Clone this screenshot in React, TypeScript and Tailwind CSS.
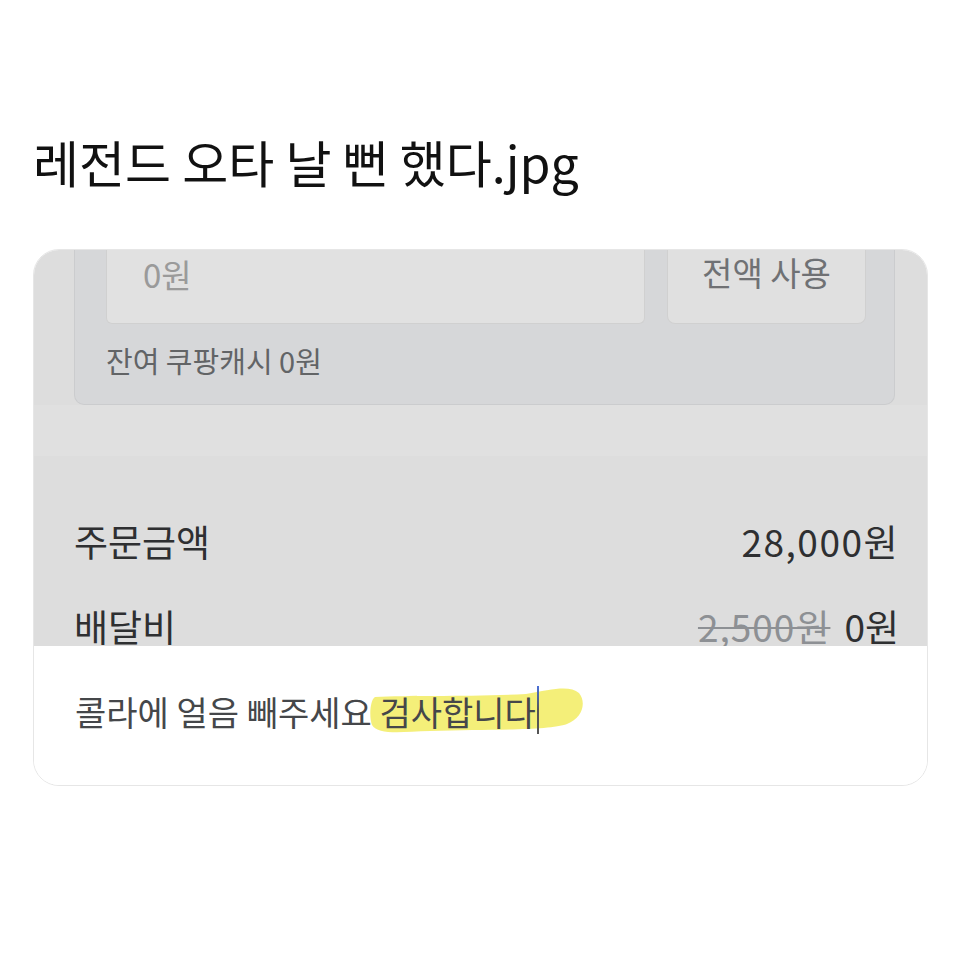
import React from 'react'

const FONT = "font-['Noto_Sans_CJK_KR','Noto_Sans',sans-serif]"

function CouponPanel() {
  return (
    <div className="h-[155px] shrink-0 rounded-b-[10px] border-x border-b border-[#cbccce] bg-[#d6d7d9] pl-[31px] pr-[28px]">
      <div className="flex h-[74px] gap-[22px]">
        <div className="flex-1 rounded-b-[6px] border-x border-b border-[#d0d0d0] bg-[#e1e1e1] pl-[36px] pt-[8px] text-[33px] leading-none text-[#9a9a9a]">
          0원
        </div>
        <div className="w-[199px] rounded-b-[8px] border-x border-b border-[#d0d0d0] bg-[#e0e0e0] pt-[6px] text-center text-[33px] leading-none text-[#6f7174]">
          전액 사용
        </div>
      </div>
      <div className="pt-[22px] text-[29px] leading-none text-[#626466]">잔여 쿠팡캐시 0원</div>
    </div>
  )
}

function PriceRows() {
  return (
    <div className="-mr-[4px] flex flex-col pt-[65px] text-[37px] leading-none text-[#2e2f31]">
      <div className="flex h-[40px] items-center justify-between">
        <span>주문금액</span>
        <span className="tracking-[1.5px]">28,000원</span>
      </div>
      <div className="mt-[45px] flex h-[40px] items-center justify-between">
        <span>배달비</span>
        <span className="flex items-center gap-[14px]">
          <span className="tracking-[1px] text-[#8d9094] line-through decoration-[2px]">2,500원</span>
          <span>0원</span>
        </span>
      </div>
    </div>
  )
}

function Highlight() {
  return (
    <span className="relative inline-block">
      <svg
        className="absolute left-[-9px] top-[-8px] h-[48px] w-[216px]"
        viewBox="0 0 216 48"
        preserveAspectRatio="none"
      >
        <path
          d="M5 10 C40 8 100 10 156 7 C182 2 200 -2 209 6 C217 16 212 31 197 37 C178 44 120 42 60 44 C30 45 8 48 2 38 C-1 30 0 13 5 10 Z"
          fill="#f3ee6e"
          fillOpacity="0.92"
        />
      </svg>
      <span className="relative">검사합니다</span>
      <span className="absolute right-[-3px] top-[-9px] h-[48px] w-[2px] bg-gradient-to-b from-[#4a6fd8] via-[#555] to-[#555]" />
    </span>
  )
}

export default function App() {
  return (
    <div className={`min-h-[960px] bg-white ${FONT}`}>
      <h1 className="pl-[33px] pt-[136px] text-[50px] leading-none font-normal text-[#111]">
        레전드 오타 날 뻔 했다.jpg
      </h1>
      <div className="ml-[33px] mt-[63px] flex h-[537px] w-[895px] flex-col overflow-hidden rounded-[26px] border border-[#e6e6e6]">
        <div className="flex h-[396px] shrink-0 flex-col overflow-hidden bg-[#dddddd] pl-[40px] pr-[32px]">
          <CouponPanel />
          <div className="-ml-[40px] -mr-[32px] h-[51px] shrink-0 bg-[#e0e0e0]" />
          <PriceRows />
        </div>
        <div className="flex-1 bg-white pl-[41px] pt-[49px] text-[34px] leading-none text-[#45474a]">
          콜라에 얼음 빼주세요 <Highlight />
        </div>
      </div>
    </div>
  )
}
